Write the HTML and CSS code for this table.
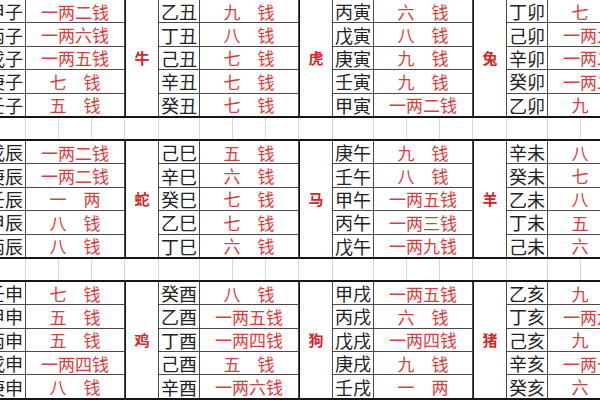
FILE: index.html
```html
<!DOCTYPE html>
<html lang="zh">
<head>
<meta charset="utf-8">
<title>称骨表</title>
<link rel="stylesheet" href="styles.css">
</head>
<body>
<div class="sheet">
  <div class="band">
    <div class="animal">鼠</div><div class="gz">甲子</div><div class="val">一两二钱</div>
    <div class="animal">牛</div><div class="gz">乙丑</div><div class="val">九　钱</div>
    <div class="animal">虎</div><div class="gz">丙寅</div><div class="val">六　钱</div>
    <div class="animal">兔</div><div class="gz">丁卯</div><div class="val">七　钱</div>

    <div class="gz">丙子</div><div class="val">一两六钱</div>
    <div class="gz">丁丑</div><div class="val">八　钱</div>
    <div class="gz">戊寅</div><div class="val">八　钱</div>
    <div class="gz">己卯</div><div class="val">一两九钱</div>

    <div class="gz">戊子</div><div class="val">一两五钱</div>
    <div class="gz">己丑</div><div class="val">七　钱</div>
    <div class="gz">庚寅</div><div class="val">九　钱</div>
    <div class="gz">辛卯</div><div class="val">一两二钱</div>

    <div class="gz">庚子</div><div class="val">七　钱</div>
    <div class="gz">辛丑</div><div class="val">七　钱</div>
    <div class="gz">壬寅</div><div class="val">九　钱</div>
    <div class="gz">癸卯</div><div class="val">一两二钱</div>

    <div class="gz">壬子</div><div class="val">五　钱</div>
    <div class="gz">癸丑</div><div class="val">七　钱</div>
    <div class="gz">甲寅</div><div class="val">一两二钱</div>
    <div class="gz">乙卯</div><div class="val">九　钱</div>
  </div>

  <div class="spacer">
    <i></i><i></i><i></i><i></i><i></i>
    <i></i><i></i><i></i><i></i><i></i>
    <i></i><i></i><i></i><i></i><i></i>
    <i></i><i></i><i></i><i></i><i></i>
  </div>

  <div class="band">
    <div class="animal">龙</div><div class="gz">戊辰</div><div class="val">一两二钱</div>
    <div class="animal">蛇</div><div class="gz">己巳</div><div class="val">五　钱</div>
    <div class="animal">马</div><div class="gz">庚午</div><div class="val">九　钱</div>
    <div class="animal">羊</div><div class="gz">辛未</div><div class="val">八　钱</div>

    <div class="gz">庚辰</div><div class="val">一两二钱</div>
    <div class="gz">辛巳</div><div class="val">六　钱</div>
    <div class="gz">壬午</div><div class="val">八　钱</div>
    <div class="gz">癸未</div><div class="val">七　钱</div>

    <div class="gz">壬辰</div><div class="val">一　两</div>
    <div class="gz">癸巳</div><div class="val">七　钱</div>
    <div class="gz">甲午</div><div class="val">一两五钱</div>
    <div class="gz">乙未</div><div class="val">八　钱</div>

    <div class="gz">甲辰</div><div class="val">八　钱</div>
    <div class="gz">乙巳</div><div class="val">七　钱</div>
    <div class="gz">丙午</div><div class="val">一两三钱</div>
    <div class="gz">丁未</div><div class="val">五　钱</div>

    <div class="gz">丙辰</div><div class="val">八　钱</div>
    <div class="gz">丁巳</div><div class="val">六　钱</div>
    <div class="gz">戊午</div><div class="val">一两九钱</div>
    <div class="gz">己未</div><div class="val">六　钱</div>
  </div>

  <div class="spacer">
    <i></i><i></i><i></i><i></i><i></i>
    <i></i><i></i><i></i><i></i><i></i>
    <i></i><i></i><i></i><i></i><i></i>
    <i></i><i></i><i></i><i></i><i></i>
  </div>

  <div class="band">
    <div class="animal">猴</div><div class="gz">壬申</div><div class="val">七　钱</div>
    <div class="animal">鸡</div><div class="gz">癸酉</div><div class="val">八　钱</div>
    <div class="animal">狗</div><div class="gz">甲戌</div><div class="val">一两五钱</div>
    <div class="animal">猪</div><div class="gz">乙亥</div><div class="val">九　钱</div>

    <div class="gz">甲申</div><div class="val">五　钱</div>
    <div class="gz">乙酉</div><div class="val">一两五钱</div>
    <div class="gz">丙戌</div><div class="val">六　钱</div>
    <div class="gz">丁亥</div><div class="val">一两六钱</div>

    <div class="gz">丙申</div><div class="val">五　钱</div>
    <div class="gz">丁酉</div><div class="val">一两四钱</div>
    <div class="gz">戊戌</div><div class="val">一两四钱</div>
    <div class="gz">己亥</div><div class="val">九　钱</div>

    <div class="gz">戊申</div><div class="val">一两四钱</div>
    <div class="gz">己酉</div><div class="val">五　钱</div>
    <div class="gz">庚戌</div><div class="val">九　钱</div>
    <div class="gz">辛亥</div><div class="val">一两七钱</div>

    <div class="gz">庚申</div><div class="val">八　钱</div>
    <div class="gz">辛酉</div><div class="val">一两六钱</div>
    <div class="gz">壬戌</div><div class="val">一　两</div>
    <div class="gz">癸亥</div><div class="val">六　钱</div>
  </div>
</div>
</body>
</html>
```

FILE: styles.css
```css
html, body {
  margin: 0;
  padding: 0;
  background: #ffffff;
  overflow: hidden;
}

body {
  width: 600px;
  height: 400px;
  font-family: "Noto Sans CJK SC", "Noto Sans", sans-serif;
}

.sheet {
  margin-top: -2px;
  margin-left: -49px;
  width: 700px;
}

.band,
.spacer {
  display: grid;
  grid-template-columns: repeat(4, 33px 40px 32px 32px 32px);
  column-gap: 1px;
}

.band {
  grid-template-rows: repeat(5, 22.4px);
  row-gap: 1px;
  background: #4a4a4a;
  border-top: 2px solid #151515;
  border-bottom: 2px solid #151515;
}

.band > div {
  background: #ffffff;
  display: flex;
  align-items: center;
  overflow: hidden;
  white-space: nowrap;
}

.animal {
  grid-row: span 5;
  justify-content: center;
  border-left: 1px solid #151515;
  color: #d42424;
  font-size: 15px;
  font-weight: 700;
}

.gz {
  padding-left: 2px;
  color: #222222;
  font-size: 18px;
  line-height: 1;
}

.val {
  grid-column: span 3;
  justify-content: center;
  color: #dc3c3c;
  font-size: 17px;
  line-height: 1;
}

.spacer {
  height: 21px;
  background: #d9d9d9;
}

.spacer > i {
  background: #ffffff;
}
```
